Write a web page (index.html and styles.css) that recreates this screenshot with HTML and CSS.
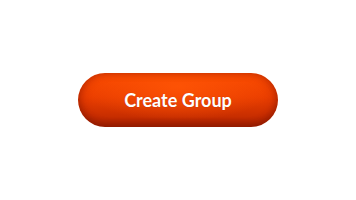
FILE: index.html
```html
<!DOCTYPE html>
<html>
<head>
<meta charset="utf-8">
<link rel="stylesheet" href="styles.css">
</head>
<body>
<div class="stage">
  <button class="btn">Create Group</button>
</div>
</body>
</html>
```

FILE: styles.css
```css
html, body {
  margin: 0;
  padding: 0;
  background: #ffffff;
}
.stage {
  width: 356px;
  height: 200px;
  display: flex;
  align-items: center;
  justify-content: center;
}
.btn {
  width: 200px;
  height: 54px;
  border: none;
  border-radius: 27px;
  background:
    radial-gradient(ellipse 65% 85% at 50% 25%, rgba(255,85,5,0.85) 0%, rgba(255,80,0,0) 75%),
    linear-gradient(to bottom, #fa4a00 0%, #ea3e00 45%, #c82e00 80%, #a82400 100%);
  box-shadow: inset 0 -3px 6px rgba(120,20,0,0.45), inset 4px 0 8px rgba(150,25,0,0.3), inset -4px 0 8px rgba(150,25,0,0.3);
  color: #ffffff;
  font-family: Lato, "Open Sans", sans-serif;
  font-weight: 700;
  font-size: 18px;
  text-shadow: 0 0 1px rgba(120,20,0,0.4);
  padding: 0;
  cursor: pointer;
}
```
